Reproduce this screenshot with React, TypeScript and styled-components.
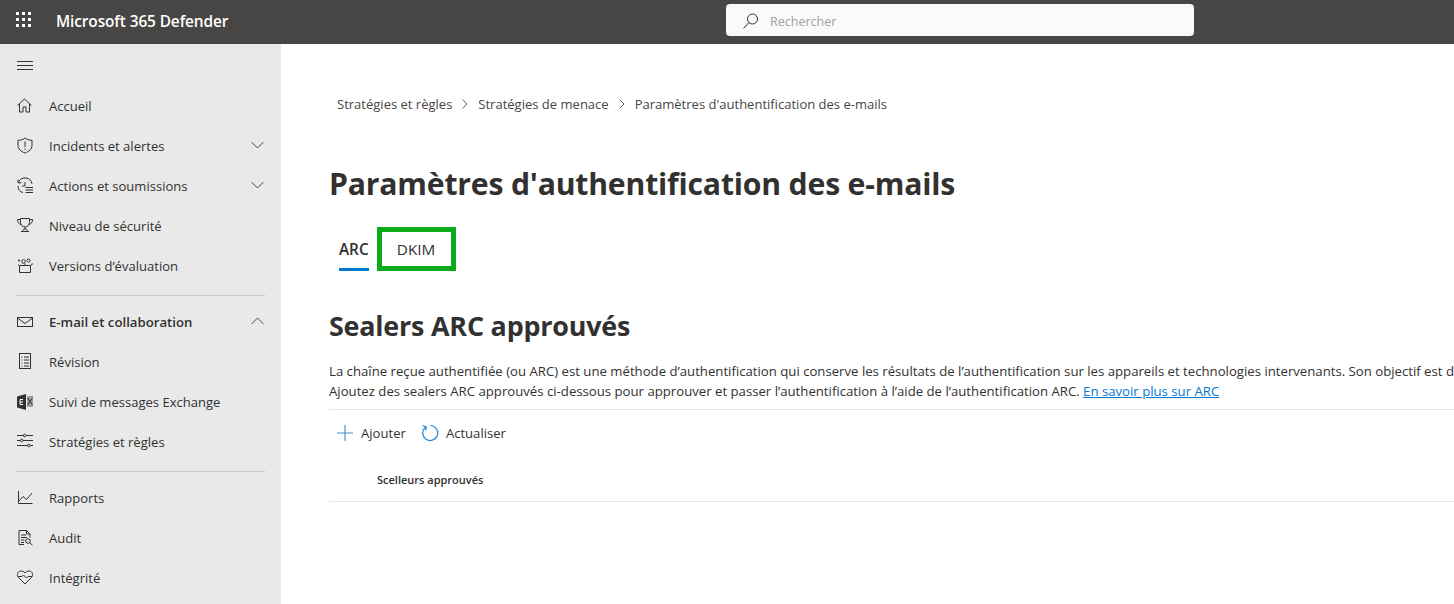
import styled, { createGlobalStyle } from "styled-components";
import { ReactNode } from "react";

const GlobalStyle = createGlobalStyle`
  html, body {
    margin: 0;
    padding: 0;
    height: 100%;
    overflow: hidden;
    background: #fff;
    font-family: "Open Sans", "Noto Sans", "Liberation Sans", sans-serif;
    color: #323130;
  }
`;

const Page = styled.div`
  display: flex;
  flex-direction: column;
  width: 1454px;
  height: 604px;
  overflow: hidden;
`;

const TopBar = styled.header`
  display: flex;
  align-items: center;
  height: 44px;
  padding-bottom: 4px;
  box-sizing: border-box;
  flex: none;
  background: #484644;
  color: #fff;
`;

const Waffle = styled.div`
  display: flex;
  justify-content: center;
  width: 48px;
  flex: none;
`;

const Brand = styled.div`
  width: 670px;
  padding: 2px 0 0 8px;
  flex: none;
  font-size: 15.4px;
  font-weight: 600;
  letter-spacing: -0.1px;
`;

const SearchBox = styled.div`
  display: flex;
  align-items: center;
  gap: 10px;
  width: 468px;
  height: 32px;
  padding: 2px 0 0 16px;
  box-sizing: border-box;
  background: #fafafa;
  border-radius: 4px;
  color: #a19f9d;
  font-size: 12.5px;
`;

const Body = styled.div`
  display: flex;
  flex: 1;
  min-height: 0;
`;

const Sidebar = styled.nav`
  width: 281px;
  flex: none;
  background: #e9e9e9;
  box-sizing: border-box;
  padding: 0 16px;
`;

const MenuButton = styled.div`
  display: flex;
  align-items: center;
  height: 42px;
`;

const NavRow = styled.div<{ $bold?: boolean }>`
  display: flex;
  align-items: center;
  height: 40px;
  font-size: ${(p) => (p.$bold ? "13.2px" : "13.05px")};
  font-weight: ${(p) => (p.$bold ? 600 : 400)};
  color: #323130;
`;

const NavIcon = styled.span`
  display: flex;
  align-items: center;
  width: 33px;
  flex: none;
`;

const NavLabel = styled.span`
  flex: 1;
  white-space: nowrap;
`;

const ChevronIcon = styled.svg`
  flex: none;
  margin: 0 1px 2px 0;
`;

const Divider = styled.hr`
  border: 0;
  border-top: 1px solid #c8c8c8;
  margin: 9px 0 6px;
  height: 0;
`;

const Main = styled.main`
  flex: 1;
  min-width: 0;
  padding-left: 48px;
  overflow: hidden;
`;

const Breadcrumb = styled.div`
  display: flex;
  align-items: center;
  gap: 9px;
  margin: 50px 0 0 8px;
  height: 20px;
  font-size: 13.03px;
  color: #484644;
`;

const Title = styled.h1`
  margin: 48px 0 0;
  height: 44px;
  line-height: 44px;
  font-size: 30.2px;
  font-weight: 700;
  letter-spacing: -0.2px;
  color: #323130;
  white-space: nowrap;
`;

const Tabs = styled.div`
  display: flex;
  align-items: stretch;
  gap: 8px;
  margin: 21px 0 0 10px;
  height: 44px;
`;

const Tab = styled.div<{ $active?: boolean }>`
  position: relative;
  display: flex;
  align-items: center;
  font-size: 15.3px;
  font-weight: ${(p) => (p.$active ? 600 : 400)};
  color: #323130;
  ${(p) =>
    p.$active &&
    `&::after {
      content: "";
      position: absolute;
      left: 0;
      right: 0;
      bottom: 0;
      height: 3px;
      background: #0078d4;
    }`}
`;

const HighlightedTab = styled(Tab)`
  width: 79px;
  box-sizing: border-box;
  justify-content: center;
  border: 5px solid #0aab1a;
`;

const SectionTitle = styled.h2`
  margin: 37px 0 0;
  height: 36px;
  line-height: 36px;
  font-size: 26.9px;
  font-weight: 700;
  letter-spacing: -0.2px;
  color: #323130;
`;

const Description = styled.p`
  margin: 17px 0 0;
  font-size: 13.18px;
  line-height: 20px;
  color: #323130;
  white-space: nowrap;
`;

const LearnMore = styled.a`
  color: #0078d4;
  text-decoration: underline;
`;

const Toolbar = styled.div`
  display: flex;
  align-items: center;
  height: 46px;
  margin-top: 8px;
  padding-left: 7px;
  border-top: 1px solid #e5e5e5;
  gap: 15px;
  font-size: 13.1px;
`;

const ToolButton = styled.div`
  display: flex;
  align-items: center;
  gap: 7px;
`;

const TableHead = styled.div`
  display: flex;
  align-items: center;
  height: 44px;
  padding: 1px 0 0 48px;
  border-bottom: 1px solid #e5e5e5;
  font-size: 11px;
  font-weight: 600;
  color: #323130;
`;

const Sep = () => (
  <svg width="8" height="12" viewBox="0 0 8 12" fill="none" stroke="#605e5c" strokeWidth="1">
    <path d="M1.500 1.500 6 6l-4.500 4.500" />
  </svg>
);

const Ico = ({ children }: { children: ReactNode }) => (
  <svg width={18} height={18} viewBox="0 0 18 18" fill="none" stroke="#323130" strokeWidth="1">
    {children}
  </svg>
);

const Chevron = ({ up }: { up?: boolean }) => (
  <ChevronIcon width="13" height="8" viewBox="0 0 13 8" fill="none" stroke="#484644" strokeWidth="1">
    <path d={up ? "M.5 7l6-6 6 6" : "M.5 1l6 6 6-6"} />
  </ChevronIcon>
);

const icons: Record<string, ReactNode> = {
  home: (
    <Ico>
      <path d="M1.500 8.500 8.500 2l7 6.500M3.500 7v8h3.500v-5h3v5h3.500V7" />
    </Ico>
  ),
  shield: (
    <Ico>
      <path d="M9 1c2 1.600 4.500 2.300 7 2.300V8.500c0 3.600-3 6-7 7.500-4-1.500-7-3.900-7-7.500V3.300c2.500 0 5-.7 7-2.300z" />
      <path d="M9 4.500V10M9 11.500v1.300" />
    </Ico>
  ),
  actions: (
    <Ico>
      <path d="M2.500 5.500A7 7 0 0 1 16 7M2 2.500v3.300h3.300M2 9a7 7 0 0 0 5 6.600M9 5v4H6" />
      <path d="M9.500 10.500H17M9.500 13H17M9.500 15.500H17" />
    </Ico>
  ),
  trophy: (
    <Ico>
      <path d="M4.500 1.500h9v4a4.500 4.500 0 0 1-9 0zM4.500 2.500H1.500c0 3 1.200 4.500 4 5M13.500 2.500h3c0 3-1.200 4.500-4 5M9 10v2M6.500 14.500c0-1.500 1-2.500 2.500-2.500s2.500 1 2.500 2.500M5 14.500h8" />
    </Ico>
  ),
  gift: (
    <Ico>
      <path d="M3.500 8.500h11v7h-11zM3.500 8.500l-1.500-1M14.500 8.500l1.500-1M9 8.500v-2" />
      <circle cx="7.500" cy="4.500" r="1.800" />
      <circle cx="12.500" cy="3.500" r="1.600" />
      <path d="M2 3.500h2M3 2.500v2M15.500 7h1.500" />
    </Ico>
  ),
  mail: (
    <Ico>
      <rect x="1.500" y="4.500" width="15" height="9" />
      <path d="M1.500 5 9 10.500 16.500 5" />
    </Ico>
  ),
  review: (
    <Ico>
      <rect x="3.500" y=".5" width="11" height="15" />
      <path d="M5.500 4h1M8 4h5M5.500 7h1M8 7h5M5.500 10h1M8 10h5M5.500 13h1M8 13h5" />
    </Ico>
  ),
  exchange: (
    <svg width="18" height="18" viewBox="0 0 18 18">
      <path d="M1 3.500 10 1v16l-9-2.500z" fill="#323130" />
      <path d="M11 3h6v11h-6z" fill="#a19f9d" />
      <path d="M11.500 5l5 7M16.500 5l-5 7" stroke="#323130" strokeWidth="1" />
      <path d="M7 6.500H4v5h3M4 9h3" stroke="#fff" strokeWidth="1" fill="none" />
    </svg>
  ),
  policy: (
    <Ico>
      <path d="M1 2.500h6.500M10 2.500h7M1 7.500h3.500M7 7.500h10M1 12.500h10.500M14 12.500h3" />
      <circle cx="8.700" cy="2.500" r="1.300" />
      <circle cx="5.700" cy="7.500" r="1.300" />
      <circle cx="12.700" cy="12.500" r="1.300" />
    </Ico>
  ),
  reports: (
    <Ico>
      <path d="M2.500 2v12.500H16.500M2.500 12.500l4.500-5 3.500 3L16 4" />
    </Ico>
  ),
  audit: (
    <Ico>
      <path d="M8 15.500H3V1.500h7.500l3.500 3.500v3.500M10.500 1.500V5H14M5 6h5M5 8.500h6M5 11h3.500M5 13.500h3" />
      <circle cx="12" cy="12" r="2.300" />
      <path d="M13.800 13.800l2.700 2.500" />
    </Ico>
  ),
  health: (
    <Ico>
      <path d="M9 15 2.500 8.500C.5 6.300 1.200 2.500 4.500 2 6.500 1.700 8 2.700 9 4c1-1.300 2.500-2.300 4.500-2 3.300.5 4 4.300 2 6.500z" />
      <path d="M2 7.500h4L7.500 6l3 3L12 7.500h4" />
    </Ico>
  ),
};

type NavItem = { icon: string; label: string; chevron?: "up" | "down"; bold?: boolean };

const groups: NavItem[][] = [
  [
    { icon: "home", label: "Accueil" },
    { icon: "shield", label: "Incidents et alertes", chevron: "down" },
    { icon: "actions", label: "Actions et soumissions", chevron: "down" },
    { icon: "trophy", label: "Niveau de sécurité" },
    { icon: "gift", label: "Versions d’évaluation" },
  ],
  [
    { icon: "mail", label: "E-mail et collaboration", chevron: "up", bold: true },
    { icon: "review", label: "Révision" },
    { icon: "exchange", label: "Suivi de messages Exchange" },
    { icon: "policy", label: "Stratégies et règles" },
  ],
  [
    { icon: "reports", label: "Rapports" },
    { icon: "audit", label: "Audit" },
    { icon: "health", label: "Intégrité" },
  ],
];

const App = () => {
  return (
    <Page>
      <GlobalStyle />
      <TopBar>
        <Waffle>
          <svg width="16" height="16" viewBox="0 0 16 16" fill="#fff">
            {[0, 1, 2].flatMap((r) =>
              [0, 1, 2].map((c) => <rect key={`${r}-${c}`} x={c * 6} y={r * 6} width="3" height="3" />)
            )}
          </svg>
        </Waffle>
        <Brand>Microsoft 365 Defender</Brand>
        <SearchBox>
          <svg width="18" height="18" viewBox="0 0 18 18" fill="none" stroke="#323130" strokeWidth="1">
            <circle cx="10.500" cy="7" r="5" />
            <path d="M7 10.500 1.500 16.500" />
          </svg>
          Rechercher
        </SearchBox>
      </TopBar>
      <Body>
        <Sidebar>
          <MenuButton>
            <svg width="18" height="12" viewBox="0 0 18 12" stroke="#323130" strokeWidth="1">
              <path d="M1 2.500h16M1 6.500h16M1 10.500h16" />
            </svg>
          </MenuButton>
          {groups.map((group, i) => (
            <div key={i}>
              {i > 0 && <Divider />}
              {group.map((item) => (
                <NavRow key={item.label} $bold={item.bold}>
                  <NavIcon>{icons[item.icon]}</NavIcon>
                  <NavLabel>{item.label}</NavLabel>
                  {item.chevron && <Chevron up={item.chevron === "up"} />}
                </NavRow>
              ))}
            </div>
          ))}
        </Sidebar>
        <Main>
          <Breadcrumb>
            <span>Stratégies et règles</span>
            <Sep />
            <span>Stratégies de menace</span>
            <Sep />
            <span>Paramètres d'authentification des e-mails</span>
          </Breadcrumb>
          <Title>Paramètres d'authentification des e-mails</Title>
          <Tabs>
            <Tab $active>ARC</Tab>
            <HighlightedTab>DKIM</HighlightedTab>
          </Tabs>
          <SectionTitle>Sealers ARC approuvés</SectionTitle>
          <Description>
            La chaîne reçue authentifiée (ou ARC) est une méthode d’authentification qui conserve les résultats de l’authentification sur les appareils et technologies intervenants. Son objectif est de
            <br />
            Ajoutez des sealers ARC approuvés ci-dessous pour approuver et passer l’authentification à l’aide de l’authentification ARC. <LearnMore>En savoir plus sur ARC</LearnMore>
          </Description>
          <Toolbar>
            <ToolButton>
              <svg width="18" height="18" viewBox="0 0 18 18" stroke="#4a90d0" strokeWidth="1.200">
                <path d="M9 1v16M1 9h16" />
              </svg>
              Ajouter
            </ToolButton>
            <ToolButton>
              <svg width="18" height="18" viewBox="0 0 18 18" fill="none" stroke="#2b88d8" strokeWidth="1.200">
                <path d="M5 2.800A7.500 7.500 0 1 0 9.500 1.500M1.500 1.500 5.300 2.800 4.500 6.500" />
              </svg>
              Actualiser
            </ToolButton>
          </Toolbar>
          <TableHead>Scelleurs approuvés</TableHead>
        </Main>
      </Body>
    </Page>
  );
};

export default App;
